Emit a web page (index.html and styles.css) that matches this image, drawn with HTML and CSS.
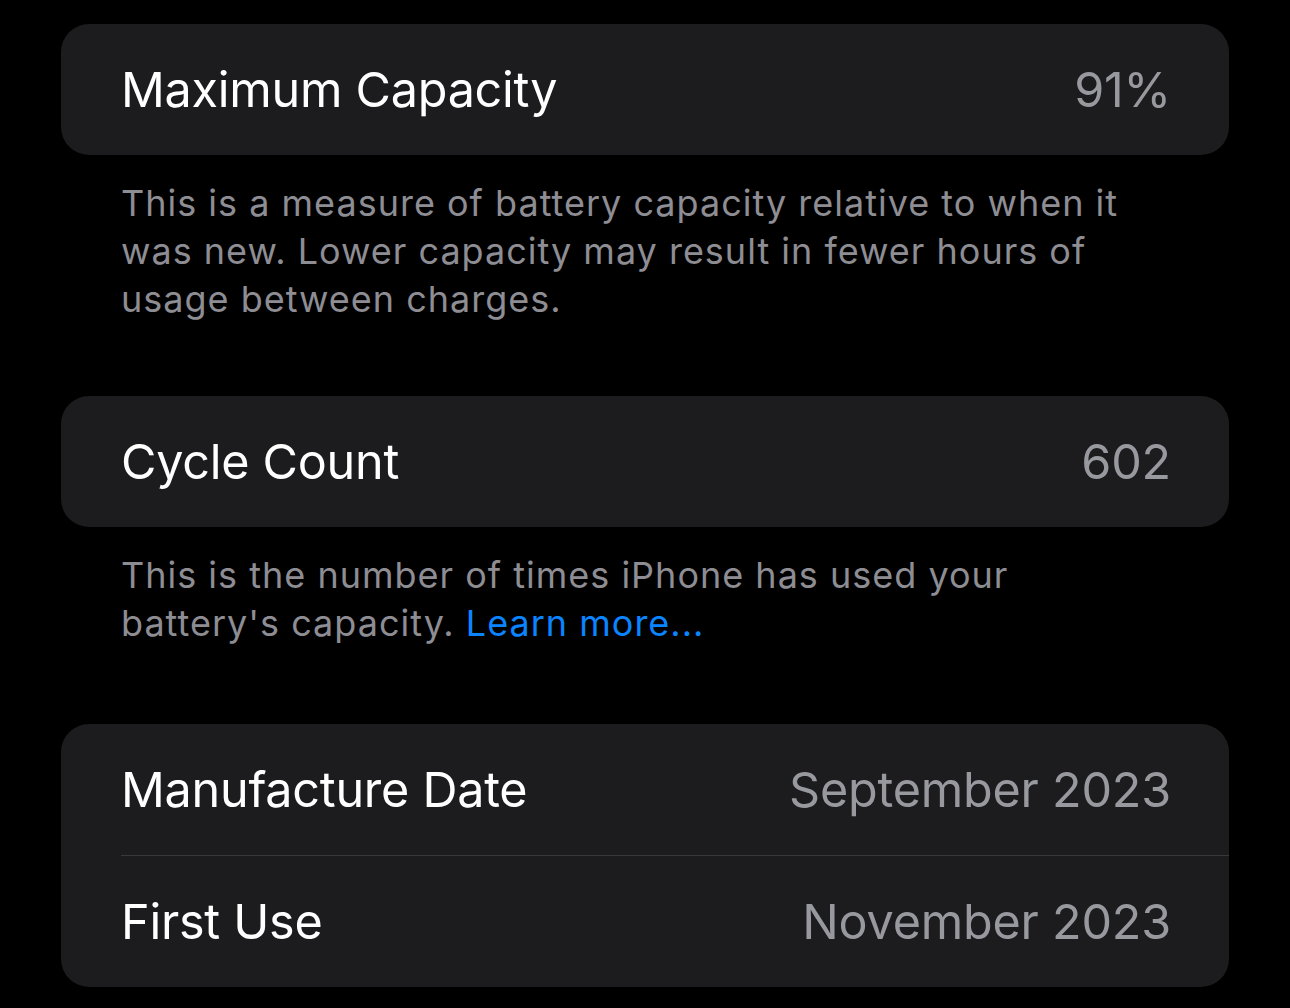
FILE: index.html
```html
<!DOCTYPE html>
<html lang="en">
<head>
    <meta charset="UTF-8">
    <title>Battery Health</title>
    <link rel="stylesheet" href="styles.css">
</head>
<body>

<div class="settings">
    <div class="group">
        <div class="row">
            <span class="label">Maximum Capacity</span>
            <span class="value">91%</span>
        </div>
    </div>
    <p class="footer">This is a measure of battery capacity relative to when it was new. Lower capacity may result in fewer hours of usage between charges.</p>

    <div class="group">
        <div class="row">
            <span class="label">Cycle Count</span>
            <span class="value">602</span>
        </div>
    </div>
    <p class="footer footer-last">This is the number of times iPhone has used your battery's capacity. <a href="#" class="link">Learn more...</a></p>

    <div class="group">
        <div class="row">
            <span class="label">Manufacture Date</span>
            <span class="value">September 2023</span>
        </div>
        <div class="row">
            <span class="label">First Use</span>
            <span class="value">November 2023</span>
        </div>
    </div>
</div>

</body>
</html>
```

FILE: styles.css
```css
body {
    margin: 0;
    background-color: #000;
    font-family: Inter, "Noto Sans", sans-serif;
    -webkit-font-smoothing: antialiased;
}
.settings {
    display: flex;
    flex-direction: column;
    padding: 24px 61px 0 61px;
}
.group {
    background-color: #1c1c1e;
    border-radius: 28px;
    padding-left: 60px;
    overflow: hidden;
}
.row {
    display: flex;
    justify-content: space-between;
    align-items: center;
    height: 131px;
    padding-right: 58px;
    box-sizing: border-box;
}
.row + .row {
    height: 132px;
    border-top: 1px solid #38383a;
}
.label {
    color: #fff;
    font-size: 48.5px;
    letter-spacing: -0.25px;
}
.value {
    color: #98989f;
    font-size: 48.5px;
    letter-spacing: -0.2px;
}
.footer {
    margin: 24px 0 73px 0;
    padding: 0 60px;
    color: #8d8d93;
    font-size: 36px;
    line-height: 48px;
    letter-spacing: 1px;
}
.footer-last {
    margin-bottom: 77px;
}
.link {
    color: #0a84ff;
    text-decoration: none;
}
```
